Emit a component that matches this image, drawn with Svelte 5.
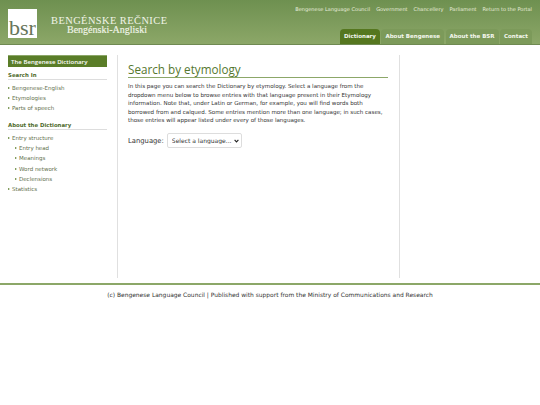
<script>
  const topLinks = ['Bengenese Language Council', 'Government', 'Chancellery', 'Parliament', 'Return to the Portal'];
  const tabs = ['Dictionary', 'About Bengenese', 'About the BSR', 'Contact'];
  const searchLinks = ['Bengenese-English', 'Etymologies', 'Parts of speech'];
  const aboutLinks = [
    { label: 'Entry structure', sub: false },
    { label: 'Entry head', sub: true },
    { label: 'Meanings', sub: true },
    { label: 'Word network', sub: true },
    { label: 'Declensions', sub: true },
    { label: 'Statistics', sub: false }
  ];
</script>

<header class="header">
  <div class="brand">
    <div class="logo">bsr</div>
    <div class="titles">
      <div class="title">BENGÉNSKE REČNICE</div>
      <div class="subtitle">Bengénski-Angliski</div>
    </div>
  </div>
  <div class="nav">
    <div class="toplinks">
      {#each topLinks as link}
        <span>{link}</span>
      {/each}
    </div>
    <div class="tabs">
      {#each tabs as tab, i}
        <span class="tab" class:active={i === 0}>{tab}</span>
      {/each}
    </div>
  </div>
</header>

<div class="body">
  <aside class="side">
    <div class="sidehead">The Bengenese Dictionary</div>
    <h4>Search In</h4>
    <ul>
      {#each searchLinks as link}
        <li>{link}</li>
      {/each}
    </ul>
    <h4 class="second">About the Dictionary</h4>
    <ul>
      {#each aboutLinks as link}
        <li class:sub={link.sub}>{link.label}</li>
      {/each}
    </ul>
  </aside>
  <main class="main">
    <h1>Search by etymology</h1>
    <p>In this page you can search the Dictionary by etymology. Select a language from the dropdown menu below to browse entries with that language present in their Etymology information. Note that, under Latin or German, for example, you will find words both borrowed from and calqued. Some entries mention more than one language; in such cases, those entries will appear listed under every of those languages.</p>
    <div class="form">
      <label for="lang">Language:</label>
      <div class="selectwrap">
        <select id="lang">
          <option>Select a language...</option>
        </select>
        <svg class="chevron" width="5" height="4" viewBox="0 0 5 4">
          <path d="M0.6 0.8 L2.5 2.9 L4.4 0.8" fill="none" stroke="#222" stroke-width="1.1" />
        </svg>
      </div>
    </div>
  </main>
  <div class="rightcol"></div>
</div>

<footer class="footer">(c) Bengenese Language Council | Published with support from the Ministry of Communications and Research</footer>

<style>
  :global(body) {
    background: #fff;
    font-family: "DejaVu Sans", Verdana, sans-serif;
    color: #333;
  }
  .header {
    height: 45px;
    box-sizing: border-box;
    display: flex;
    justify-content: space-between;
    background: linear-gradient(#6e9050, #8ca768);
    border-bottom: 1px solid #6f8a52;
  }
  .brand {
    display: flex;
    align-items: flex-start;
    padding: 9px 0 0 8px;
  }
  .logo {
    width: 29px;
    height: 29px;
    background: #fff;
    color: #66755a;
    font-family: "Liberation Serif", serif;
    font-size: 22px;
    line-height: 20px;
    display: flex;
    align-items: flex-end;
    justify-content: center;
  }
  .titles {
    margin: 7px 0 0 14px;
    color: #f1f5e8;
    font-family: "Liberation Serif", serif;
  }
  .title {
    font-size: 10.4px;
    line-height: 9px;
    letter-spacing: 0.45px;
  }
  .subtitle {
    font-size: 10px;
    line-height: 9px;
    padding-left: 16px;
    -webkit-text-stroke: 0.15px #f1f5e8;
  }
  .nav {
    display: flex;
    flex-direction: column;
    justify-content: space-between;
    align-items: flex-end;
    padding-right: 8px;
  }
  .toplinks {
    display: flex;
    gap: 6px;
    font-size: 5.05px;
    line-height: 6px;
    color: #e8eedd;
    padding-top: 6px;
  }
  .tabs {
    display: flex;
    gap: 1.5px;
  }
  .tab {
    height: 15px;
    line-height: 15px;
    padding: 0 4px;
    font-size: 5.5px;
    font-weight: bold;
    color: #f4f7ee;
    background: #7c9a5a;
    border-radius: 4px 4px 0 0;
  }
  .tab.active {
    background: #55771f;
  }
  .body {
    display: flex;
    height: 223px;
    margin-top: 10px;
  }
  .side {
    width: 99px;
    margin-left: 8px;
    flex: none;
  }
  .sidehead {
    background: #5a7d28;
    border-top: 1px solid #8ca768;
    color: #fff;
    font-family: "Open Sans", sans-serif;
    font-size: 6.1px;
    font-weight: 600;
    line-height: 11px;
    padding-left: 3px;
  }
  h4 {
    margin: 3.5px 0 0;
    font-size: 5.4px;
    line-height: 8.5px;
    color: #4f6b2c;
    border-bottom: 1px solid #ddd;
  }
  h4.second {
    margin-top: 7.5px;
  }
  ul {
    list-style: none;
    margin: 3px 0 0;
    padding: 0;
  }
  li {
    font-size: 5.5px;
    line-height: 10.1px;
    color: #5f6f4c;
    padding-left: 4px;
    position: relative;
  }
  li::before {
    content: '';
    position: absolute;
    left: 0;
    top: 4px;
    border-left: 2px solid #5a7d28;
    border-top: 1px solid transparent;
    border-bottom: 1px solid transparent;
  }
  li.sub {
    margin-left: 7px;
  }
  .main {
    width: 271px;
    margin-left: 10px;
    border-left: 1px solid #e0e0e0;
    padding-left: 10px;
    flex: none;
  }
  h1 {
    margin: 6px 0 0;
    width: 260px;
    font-family: "Open Sans", sans-serif;
    font-weight: normal;
    font-size: 11.7px;
    line-height: 16px;
    color: #55772f;
    border-bottom: 1px solid #8ca768;
  }
  p {
    margin: 4px 0 0;
    width: 262px;
    font-size: 5.55px;
    line-height: 8.5px;
    color: #333;
  }
  .form {
    display: flex;
    align-items: center;
    gap: 3px;
    margin-top: 8.5px;
    font-size: 6.8px;
  }
  .selectwrap {
    position: relative;
    display: flex;
  }
  select {
    appearance: none;
    font-family: inherit;
    font-size: 6px;
    height: 15px;
    width: 75px;
    padding: 0 0 0 4px;
    background: #fff;
    border: 1px solid #ddd;
    border-radius: 2px;
    color: #333;
  }
  .chevron {
    position: absolute;
    right: 3px;
    top: 5.5px;
    pointer-events: none;
  }
  .rightcol {
    border-left: 1px solid #e0e0e0;
  }
  .footer {
    margin-top: 5px;
    border-top: 2px solid #8ca768;
    padding-top: 6px;
    text-align: center;
    font-size: 5.95px;
    line-height: 8px;
    color: #333;
  }
</style>
